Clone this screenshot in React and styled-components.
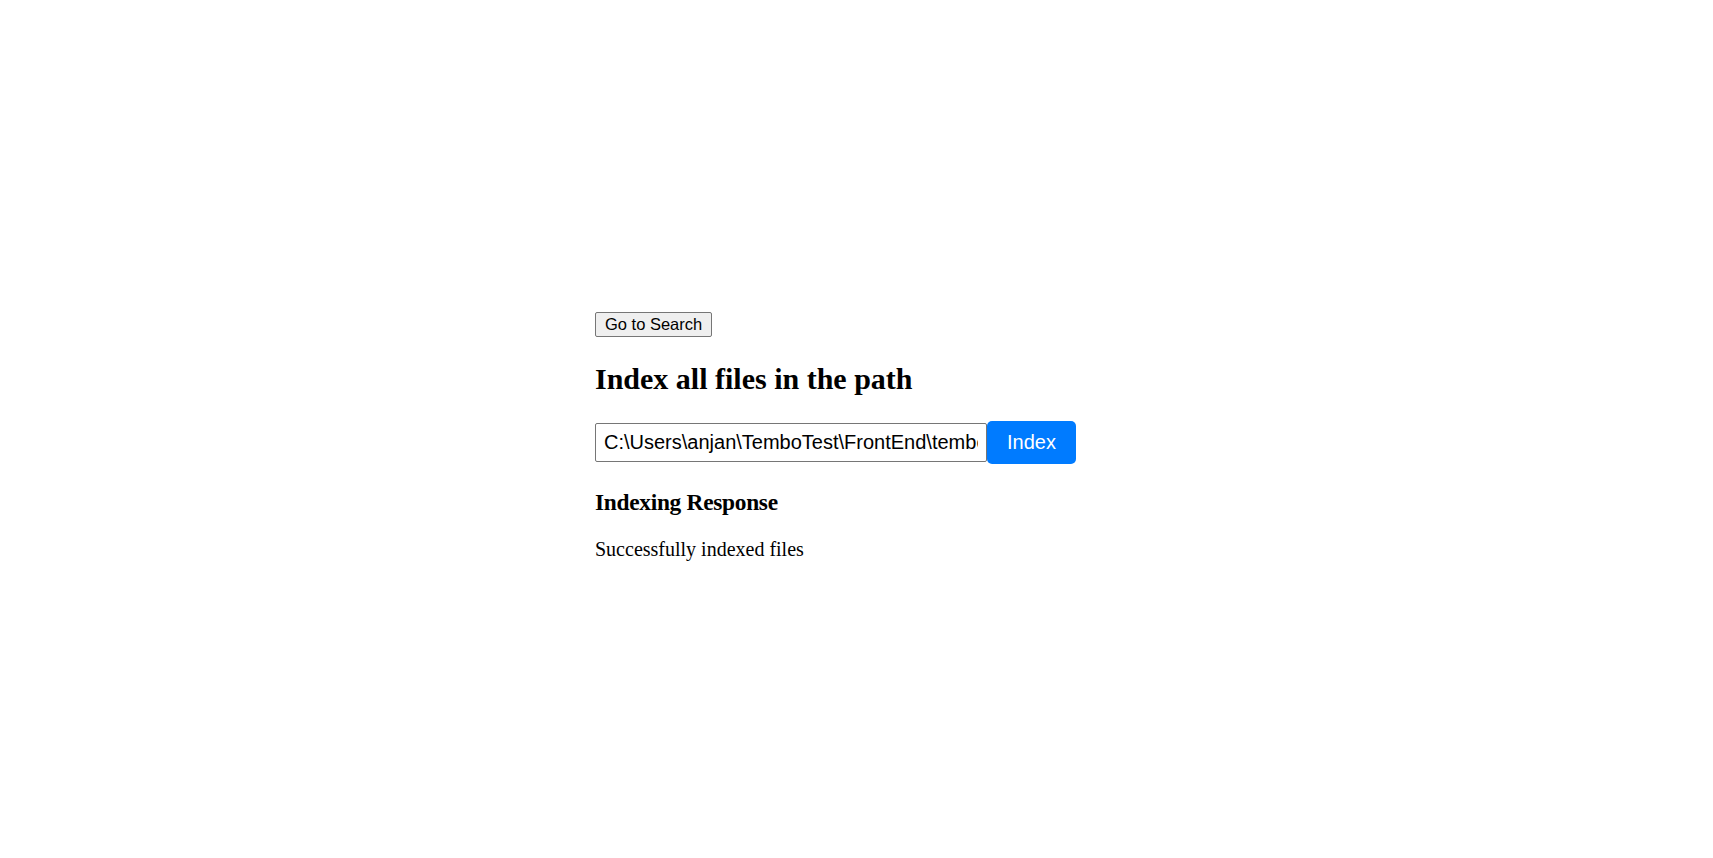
import React from 'react'
import styled, { createGlobalStyle } from 'styled-components'

const GlobalStyle = createGlobalStyle`
  body {
    margin: 0;
    font-family: "Liberation Serif", "Times New Roman", serif;
    font-size: 20px;
    background: #fff;
    color: #000;
  }
`

const Page = styled.div`
  min-height: 100vh;
  display: flex;
  justify-content: center;
  align-items: center;
`

const Container = styled.div`
  width: 523px;
  padding-top: 35px;
`

const NavButton = styled.button`
  font-family: "Liberation Sans", Arial, sans-serif;
  font-size: 16.5px;
  line-height: 19px;
  padding: 2px 9px;
  background: #efefef;
  border: 1px solid #767676;
  border-radius: 2px;
  color: #000;
`

const Title = styled.h2`
  font-size: 1.5em;
  font-weight: bold;
  margin: 0.83em 0;
`

const Row = styled.div`
  display: flex;
  align-items: center;
`

const PathInput = styled.input`
  width: 392px;
  box-sizing: border-box;
  font-family: "Liberation Sans", Arial, sans-serif;
  font-size: 20px;
  padding: 7px 8px;
  border: 1px solid #767676;
  border-radius: 2px;
  color: #000;
  outline: none;
`

const SubmitButton = styled.button`
  font-family: "Liberation Sans", Arial, sans-serif;
  font-size: 20px;
  padding: 10px 20px;
  background: #007bff;
  color: #fff;
  border: none;
  border-radius: 5px;
  cursor: pointer;
`

const SubTitle = styled.h3`
  font-size: 1.17em;
  font-weight: bold;
  margin: 25.5px 0 21.4px;
  letter-spacing: -0.3px;
`

const Message = styled.p`
  margin: 1em 0;
`

const App = () => {
  return (
    <>
      <GlobalStyle />
      <Page>
        <Container>
          <NavButton>Go to Search</NavButton>
          <Title>Index all files in the path</Title>
          <Row>
            <PathInput
              type="text"
              defaultValue="C:\Users\anjan\TemboTest\FrontEnd\tembo-search\documents"
            />
            <SubmitButton>Index</SubmitButton>
          </Row>
          <SubTitle>Indexing Response</SubTitle>
          <Message>Successfully indexed files</Message>
        </Container>
      </Page>
    </>
  )
}

export default App
